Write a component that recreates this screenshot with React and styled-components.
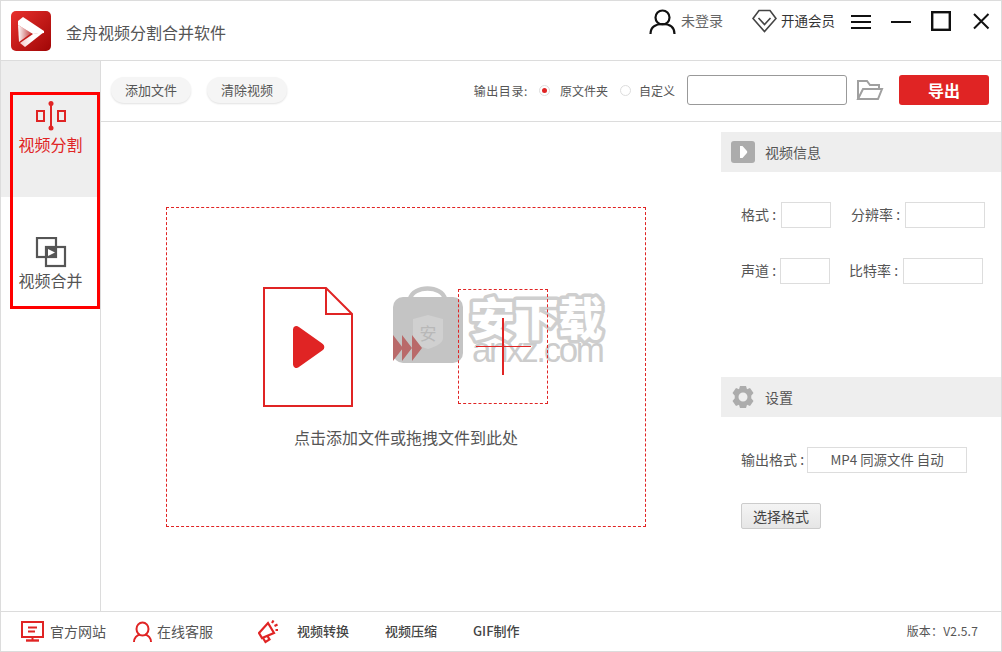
import React from "react";
import styled, { createGlobalStyle } from "styled-components";

const Global = createGlobalStyle`
  html, body { margin: 0; padding: 0; background: #fff; }
  * { box-sizing: border-box; }
  body { font-family: "Noto Sans CJK SC", "Noto Sans", sans-serif; }
`;
const Window = styled.div`
  width: 1002px; height: 652px; border: 1px solid #dcdcdc; display: flex; flex-direction: column;
  position: relative; overflow: hidden; background: #fff; color: #555;
`;
const TitleBar = styled.header`
  height: 60px; flex: none; display: flex; align-items: flex-start; border-bottom: 1px solid #dcdcdc; padding: 0 10px 0 10px;
`;
const Logo = styled.svg`width: 40px; height: 40px; margin-top: 10px; flex: none;`;
const AppTitle = styled.h1`font-size: 16px; font-weight: 400; color: #555; margin: 20px 0 0 15px; line-height: 22px;`;
const TitleRight = styled.div`margin-left: auto; display: flex; align-items: flex-start;`;
const Account = styled.div`
  display: flex; align-items: center; height: 24px; margin-top: 8px; margin-right: ${p => p.$mr}px; gap: ${p => p.$gap}px;
  font-size: ${p => p.$size}px; color: ${p => p.$color}; white-space: nowrap;
`;
const AccountText = styled.span`padding-bottom: 2px;`;
const WinIcon = styled.svg`width: 20px; height: 20px; margin-top: 10px; margin-right: 20px; flex: none; &:last-child { margin-right: 0; }`;
const Body = styled.div`flex: 1; display: flex; min-height: 0;`;
const Sidebar = styled.nav`width: 100px; flex: none; border-right: 1px solid #dcdcdc;`;
const NavItem = styled.div`
  height: 136px; padding-top: 40px; display: flex; flex-direction: column; align-items: center;
  background: ${p => (p.$active ? "#eeeeee" : "#fff")}; color: ${p => (p.$active ? "#e02424" : "#555")};
  font-size: 16px; line-height: 22px;
`;
const NavIcon = styled.svg`width: 32px; height: 32px; flex: none;`;
const Highlight = styled.div`position: absolute; left: 9px; top: 91px; width: 90px; height: 217px; border: 3px solid #ff0000; pointer-events: none;`;
const Content = styled.div`flex: 1; display: flex; flex-direction: column; min-width: 0;`;
const Toolbar = styled.div`height: 61px; flex: none; display: flex; align-items: center; border-bottom: 1px solid #dcdcdc; padding: 0 12px 2px 10px;`;
const PillButton = styled.button`
  width: 80px; height: 26px; margin-right: 16px; border: 0; border-radius: 13px; background: #f5f5f5; box-shadow: 0 1px 2px rgba(0,0,0,.12);
  font: 400 13px "Noto Sans CJK SC", sans-serif; color: #555; padding: 0 0 1px;
`;
const OutputLabel = styled.span`margin-left: auto; font-size: 12px; letter-spacing: .6px; color: #555; white-space: nowrap;`;
const Radio = styled.span`
  width: 11px; height: 11px; border-radius: 50%; border: 1px solid #ddd; margin: 0 ${p => p.$right}px 0 ${p => p.$left}px; display: flex; align-items: center; justify-content: center; flex: none;
  &::after { content: ""; width: 5px; height: 5px; border-radius: 50%; background: ${p => (p.$on ? "#e02424" : "transparent")}; }
`;
const RadioText = styled.span`font-size: 12px; color: #555; white-space: nowrap;`;
const PathInput = styled.div`width: 160px; height: 30px; border: 1px solid #999; border-radius: 3px; margin: 0 9px 0 12px;`;
const FolderIcon = styled.svg`width: 28px; height: 22px; flex: none; margin-right: 15px;`;
const ExportButton = styled.button`
  width: 90px; height: 30px; border: 0; border-radius: 3px; background: #e02424; color: #fff; font: 700 16px "Noto Sans CJK SC", sans-serif; padding: 0;
`;
const Main = styled.div`flex: 1; display: flex; min-height: 0;`;
const Stage = styled.section`flex: 1; padding: 85px 0 0 65px; min-width: 0;`;
const DropZone = styled.div`
  width: 480px; height: 320px; border: 1px dashed #e02424; display: flex; flex-direction: column; align-items: center; padding-top: 79px;
`;
const Illustration = styled.div`position: relative; width: 286px; height: 120px; display: flex; align-items: flex-start;`;
const FileIcon = styled.svg`width: 90px; height: 120px; flex: none;`;
const Chevrons = styled.svg`position: relative; z-index: 1; width: 30px; height: 26px; flex: none; margin: 48px 0 0 40px;`;
const CutBox = styled.div`
  position: relative; z-index: 1; width: 90px; height: 115px; margin: 2px 0 0 35px; border: 1px dashed #e02424; flex: none;
`;
const CrossV = styled.i`position: absolute; left: 43px; top: 28px; width: 2px; height: 57px; background: #e02424;`;
const CrossH = styled.i`position: absolute; left: 17px; top: 56px; width: 55px; height: 1px; background: #e02424;`;
const Watermark = styled.svg`position: absolute; left: 130px; top: -4px; width: 220px; height: 84px;`;
const WatermarkTitle = styled.text`paint-order: stroke; stroke-linejoin: round;`;
const DropText = styled.p`margin: 19px 0 0; font-size: 16px; line-height: 22px; color: #555;`;
const Panel = styled.aside`width: 280px; flex: none; padding-top: 10px;`;
const PanelHeader = styled.div`
  height: 40px; background: #eeeeee; display: flex; align-items: center; padding-left: 10px; gap: 10px; font-size: 14px; color: #555;
`;
const HeaderIcon = styled.svg`width: 24px; height: 24px; flex: none;`;
const InfoGrid = styled.div`padding: 30px 0 93px 20px; display: flex; flex-direction: column; gap: 30px; height: 205px;`;
const FieldRow = styled.div`display: flex; align-items: center; height: 26px;`;
const FieldLabel = styled.span`width: ${p => p.$w}px; flex: none; font-size: 14px; color: #555; white-space: nowrap; padding-bottom: 2px;`;
const FieldBox = styled.div`
  width: ${p => p.$w}px; height: 26px; flex: none; border: 1px solid #dddddd; margin-right: ${p => p.$mr || 0}px;
  font-size: 13.4px; color: #555; display: flex; align-items: center; justify-content: center; white-space: nowrap; padding-bottom: 2px;
`;
const Settings = styled.div`padding: 30px 0 0 20px;`;
const FormatButton = styled.button`
  display: block; margin-top: 30px; width: 80px; height: 26px; border: 1px solid #ccc; border-radius: 2px; background: linear-gradient(#f4f4f4, #e6e6e6);
  font: 400 14px "Noto Sans CJK SC", sans-serif; color: #444; padding: 0;
`;
const Footer = styled.footer`
  height: 40px; flex: none; border-top: 1px solid #dcdcdc; display: flex; align-items: center; padding: 0 23px 2px 20px;
`;
const FootLink = styled.span`
  display: flex; align-items: center; gap: ${p => p.$gap || 0}px; font-size: ${p => p.$size || 14}px; color: ${p => p.$color || "#555"};
  width: ${p => p.$w}px; flex: none; white-space: nowrap; font-weight: ${p => p.$weight || 400};
`;
const FootIcon = styled.svg`width: ${p => p.$w}px; height: 24px; flex: none; position: relative; top: 1px;`;
const Version = styled.span`margin-left: auto; font-size: 12px; letter-spacing: .2px; color: #555; white-space: nowrap;`;

const R = "#e02424";

export default function App() {
  return (
    <Window>
      <Global />
      <TitleBar>
        <Logo viewBox="0 0 40 40">
          <defs>
            <linearGradient id="lg" x1="0" y1="0" x2="1" y2="1"><stop offset="0" stopColor="#e8302c" /><stop offset="1" stopColor="#a00606" /></linearGradient>
            <linearGradient id="lw" x1="0" y1="0" x2="1" y2="0"><stop offset="0" stopColor="#fff" /><stop offset="1" stopColor="#c04040" /></linearGradient>
            <linearGradient id="lb" x1="0" y1="0" x2="1" y2="0"><stop offset="0" stopColor="#f4c8c8" /><stop offset=".5" stopColor="#fff" /><stop offset="1" stopColor="#fff" /></linearGradient>
          </defs>
          <rect width="40" height="40" rx="5" fill="url(#lg)" />
          <path d="M7 14L20.500 22L8 31Z" fill="url(#lw)" />
          <path d="M7 10L12 6L33 20L33 22L22 23L7 14Z" fill="#fff" />
          <path d="M33 21L14 36L9 32L22 23Z" fill="url(#lb)" />
        </Logo>
        <AppTitle>金舟视频分割合并软件</AppTitle>
        <TitleRight>
          <Account $mr={29} $gap={5} $size={14} $color="#666">
            <svg width="27" height="25" viewBox="0 0 27 25" fill="none" stroke="#111" strokeWidth="2.200">
              <circle cx="13.500" cy="8.500" r="7" />
              <path d="M1.500 25c0-7 5-10 12-10s12 3 12 10" />
            </svg>
            <AccountText>未登录</AccountText>
          </Account>
          <Account $mr={16} $gap={4} $size={13.5} $color="#333">
            <svg width="25" height="24" viewBox="0 0 25 24" fill="none" stroke="#444" strokeWidth="1.600">
              <path d="M7 1.500h11l6 8-11.500 13L1 9.500z" />
              <path d="M6.500 9l6 6.500 6-6.500" />
            </svg>
            <AccountText>开通会员</AccountText>
          </Account>
          <WinIcon viewBox="0 0 20 20" stroke="#111" strokeWidth="2"><path d="M0 5h20M0 11h20M0 17h20" /></WinIcon>
          <WinIcon viewBox="0 0 20 20" stroke="#111" strokeWidth="2"><path d="M0 11h20" /></WinIcon>
          <WinIcon viewBox="0 0 20 20" fill="none" stroke="#111" strokeWidth="2.400"><rect x="1.200" y="1.200" width="17.600" height="17.600" /></WinIcon>
          <WinIcon viewBox="0 0 20 20" stroke="#111" strokeWidth="2"><path d="M3 3l14.500 14.500M17.500 3L3 17.500" /></WinIcon>
        </TitleRight>
      </TitleBar>
      <Body>
        <Sidebar>
          <NavItem $active>
            <NavIcon viewBox="0 0 32 32" fill="none" stroke={R} strokeWidth="2">
              <path d="M16 2v25" />
              <circle cx="16" cy="2.500" r="2.500" fill={R} stroke="none" />
              <circle cx="16" cy="27" r="2.500" fill={R} stroke="none" />
              <rect x="2" y="10" width="7" height="10" />
              <rect x="23" y="10" width="7" height="10" />
            </NavIcon>
            视频分割
          </NavItem>
          <NavItem>
            <NavIcon viewBox="0 0 32 32" fill="none" stroke="#555" strokeWidth="2.200">
              <rect x="2" y="1" width="19" height="19" />
              <rect x="11" y="10" width="19" height="19" />
              <rect x="11" y="10" width="11" height="11" fill="#555" stroke="none" />
              <path d="M13 12l7 3.500-7 3.500z" fill="#fff" stroke="none" />
            </NavIcon>
            视频合并
          </NavItem>
        </Sidebar>
        <Content>
          <Toolbar>
            <PillButton>添加文件</PillButton>
            <PillButton>清除视频</PillButton>
            <OutputLabel>输出目录:</OutputLabel>
            <Radio $on $left={11} $right={10} />
            <RadioText>原文件夹</RadioText>
            <Radio $left={12} $right={8} />
            <RadioText>自定义</RadioText>
            <PathInput />
            <FolderIcon viewBox="0 0 28 22" fill="none" stroke="#a0a0a0" strokeWidth="2">
              <path d="M2 20V2h9l3 4h9v4" />
              <path d="M2 20l5-10h19l-4 10z" />
            </FolderIcon>
            <ExportButton>导出</ExportButton>
          </Toolbar>
          <Main>
            <Stage>
              <DropZone>
                <Illustration>
                  <FileIcon viewBox="0 0 90 120" fill="none" stroke={R} strokeWidth="2">
                    <path d="M1 1h62l26 26v92H1z" />
                    <path d="M63 1v26h26" />
                    <path d="M31 42.500a2.500 2.500 0 0 1 4-2l24 17a3 3 0 0 1 0 5l-24 17a2.500 2.500 0 0 1-4-2z" fill={R} stroke={R} />
                  </FileIcon>
                  <Watermark viewBox="0 0 220 84">
                    <path d="M17 16c3-14 32-14 35 0" fill="none" stroke="#c6c6c6" strokeWidth="4.500" />
                    <rect x="0" y="14" width="70" height="66" rx="10" fill="#c4c4c4" />
                    <path d="M20 36l15-4 15 4v19c0 6-9 9-15 11-6-2-15-5-15-11z" fill="#d0d0d0" />
                    <text x="35" y="57" textAnchor="middle" fontSize="17" fontFamily="Noto Sans CJK SC, sans-serif" fill="#b8b8b8">安</text>
                    <WatermarkTitle x="77" y="53" fontSize="45" fontWeight="900" textLength="133" fontFamily="Noto Sans CJK SC, sans-serif" fill="#fff" stroke="#cfcfcf" strokeWidth="7">安下载</WatermarkTitle>
                    <text x="79" y="79" fontSize="35" textLength="133" fontFamily="Liberation Sans, sans-serif" fill="#cccccc">anxz.com</text>
                  </Watermark>
                  <Chevrons viewBox="0 0 30 26">
                    <path d="M0 0l10 13L0 26zM9 0l10 13L9 26zM19 0l10 13-10 13z" fill="#b96a6a" />
                  </Chevrons>
                  <CutBox>
                    <CrossV />
                    <CrossH />
                  </CutBox>
                </Illustration>
                <DropText>点击添加文件或拖拽文件到此处</DropText>
              </DropZone>
            </Stage>
            <Panel>
              <PanelHeader>
                <HeaderIcon viewBox="0 0 24 24">
                  <rect width="24" height="22" y="1" rx="3" fill="#acacac" />
                  <path d="M9 6h2.500l4 4.500c1 1 1 2 0 3L11.500 18H9z" fill="#fff" />
                </HeaderIcon>
                视频信息
              </PanelHeader>
              <InfoGrid>
                <FieldRow>
                  <FieldLabel $w={40}>格式 :</FieldLabel>
                  <FieldBox $w={50} $mr={20} />
                  <FieldLabel $w={54}>分辨率 :</FieldLabel>
                  <FieldBox $w={80} />
                </FieldRow>
                <FieldRow>
                  <FieldLabel $w={39}>声道 :</FieldLabel>
                  <FieldBox $w={50} $mr={19} />
                  <FieldLabel $w={54}>比特率 :</FieldLabel>
                  <FieldBox $w={80} />
                </FieldRow>
              </InfoGrid>
              <PanelHeader>
                <HeaderIcon viewBox="0 0 24 24">
                  <path fillRule="evenodd" fill="#acacac" d="M9 1h6l1 3.200 3-1.200 3.500 5-2.300 2.700a8 8 0 0 1 0 2.600l2.300 2.700-3.500 5-3-1.200-1 3.200H9l-1-3.200-3 1.200-3.500-5 2.300-2.700a8 8 0 0 1 0-2.600L1.500 8 5 3l3 1.200zM12 7.500a4.500 4.500 0 1 0 0 9 4.500 4.500 0 0 0 0-9z" />
                </HeaderIcon>
                设置
              </PanelHeader>
              <Settings>
                <FieldRow>
                  <FieldLabel $w={66}>输出格式 :</FieldLabel>
                  <FieldBox $w={160}>MP4 同源文件 自动</FieldBox>
                </FieldRow>
                <FormatButton>选择格式</FormatButton>
              </Settings>
            </Panel>
          </Main>
        </Content>
      </Body>
      <Footer>
        <FootLink $w={112} $gap={6}>
          <FootIcon $w={23} viewBox="0 0 23 24" fill="none" stroke={R} strokeWidth="2">
            <rect x="1" y="2" width="21" height="15" />
            <path d="M7 7.500h9M7 11.500h7" />
            <path d="M5 20.500h13" strokeWidth="2.400" />
            <path d="M11.500 17v3" />
          </FootIcon>
          官方网站
        </FootLink>
        <FootLink $w={125} $gap={5}>
          <FootIcon $w={19} viewBox="0 0 19 24" fill="none" stroke={R} strokeWidth="2">
            <ellipse cx="9.500" cy="9" rx="6" ry="6.500" />
            <path d="M1 22c0-4 3-7 6-7.500M18 22c0-4-3-7-6-7.500" />
          </FootIcon>
          在线客服
        </FootLink>
        <FootLink $w={39}>
          <FootIcon $w={20} viewBox="0 0 20 24" fill="none" stroke={R} strokeWidth="2.200">
            <path d="M1 13L10 3l6 10-12 5z" />
            <path d="M5 18l2.500 4 4-2.500-2-3.500" />
            <path d="M14 3l1.500-2.500M16.500 6l3-1.500M17.500 10h2.500" />
          </FootIcon>
        </FootLink>
        <FootLink $w={88} $size={13} $color="#444" $weight={500}>视频转换</FootLink>
        <FootLink $w={88} $size={13} $color="#444" $weight={500}>视频压缩</FootLink>
        <FootLink $w={60} $size={13} $color="#444" $weight={500}>GIF制作</FootLink>
        <Version>版本：V2.5.7</Version>
      </Footer>
      <Highlight />
    </Window>
  );
}
